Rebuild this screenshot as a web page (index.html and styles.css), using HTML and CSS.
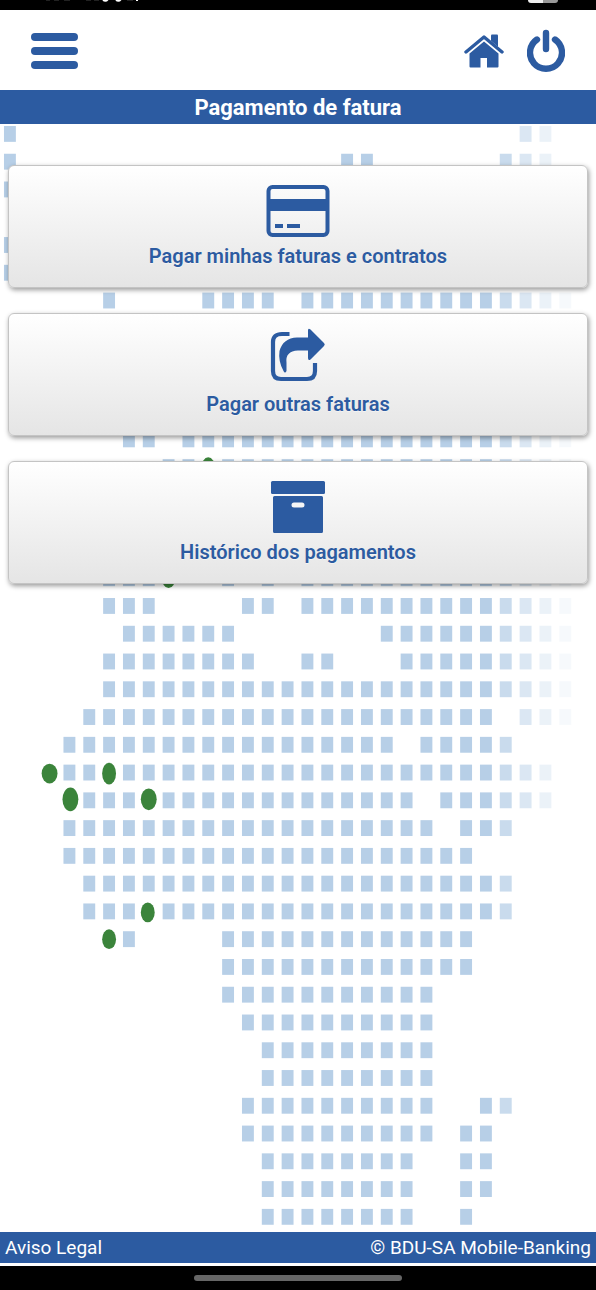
FILE: index.html
```
<!DOCTYPE html>
<html lang="pt">
<head>
  <meta charset="UTF-8" />
  <meta name="viewport" content="width=device-width, initial-scale=1.0"/>
  <title>Pagamento de fatura</title>
  <link rel="stylesheet" href="styles.css">
</head>
<body>
  <div class="status-bar">
    <svg class="status-left" viewBox="0 0 100 10" aria-hidden="true">
      <path d="M4 0h4M12 0h5M22 0h6M44 0h5M52 0h5M74 0h3M85 0h6" stroke="#444" stroke-width="1"/>
      <path d="M61 0q3 2 5-1M74 0q3 2 5-1" fill="none" stroke="#fff" stroke-width="2"/>
      <path d="M95 0v1" stroke="#fff" stroke-width="2"/>
    </svg>
    <span class="status-pill"></span>
  </div>

  <header class="top-bar">
    <button class="icon-btn" aria-label="Menu">
      <svg width="48" height="38" viewBox="0 0 48 38">
        <rect x="1" y="1" width="47" height="8" rx="4"/>
        <rect x="1" y="15" width="47" height="8" rx="4"/>
        <rect x="1" y="29" width="47" height="8" rx="4"/>
      </svg>
    </button>
    <nav class="top-actions">
      <a class="icon-btn" href="#" aria-label="Início">
        <svg width="40" height="34" viewBox="0 0 40 34">
          <path d="M27 1.5q0-1 1-1h5q1 0 1 1v11.2l-7-6z"/>
          <path d="M2 18 20 3l18 15" fill="none" stroke="#2c5ba1" stroke-width="3.4" stroke-linecap="round" stroke-linejoin="round"/>
          <path d="M20 7.5 34.5 19.5V32.5q0 1-1 1H23V24h-6.500v9.500H6.500q-1 0-1-1V19.500z"/>
        </svg>
      </a>
      <a class="icon-btn" href="#" aria-label="Sair">
        <svg width="38" height="44" viewBox="0 0 38 44">
          <path d="M10 10.5A16 16 0 1 0 28 10.5M19 4v16" fill="none" stroke="#2c5ba1" stroke-width="6.4" stroke-linecap="round"/>
        </svg>
      </a>
    </nav>
  </header>

  <h1 class="page-title">Pagamento de fatura</h1>

  <main class="content">
    <svg class="map" id="map" viewBox="0 -1 601 1117" aria-hidden="true"></svg>

    <div class="menu">
      <button class="card">
        <svg width="64" height="54" viewBox="0 0 64 54">
          <rect x="2.500" y="3" width="59" height="48" rx="4" fill="none" stroke="#2c5ba1" stroke-width="4"/>
          <path d="M1 15h62v12H1zM9 40h8v4H9zM21 40h13v4H21z"/>
        </svg>
        <span>Pagar minhas faturas e contratos</span>
      </button>
      <button class="card">
        <svg width="56" height="54" viewBox="0 5 56 54">
          <path d="M19.500 7H12Q3 7 3 15v29q0 8 8 8h26q8 0 8-8v-8" fill="none" stroke="#2c5ba1" stroke-width="4.2"/>
          <path d="M38 3.500q0-3 2.500-1L54 16q1.500 1.500 0 3L40.500 32.500Q38 34 38 31v-7.500H28Q15 24 16.500 36v8q-1.500 3-3 0Q8 34 9.500 24 13 11 27 10.500h11z"/>
        </svg>
        <span>Pagar outras faturas</span>
      </button>
      <button class="card">
        <svg width="56" height="54" viewBox="0 0 56 54">
          <rect x="1" y="1" width="54" height="13" rx="1.5"/>
          <path fill-rule="evenodd" d="M4.500 16h47q1.500 0 1.500 1.500v34q0 1.500-1.500 1.500h-47Q3 53 3 51.500v-34Q3 16 4.500 16zM24 22.500a2.500 2.500 0 0 0 0 5h8a2.500 2.500 0 0 0 0-5z"/>
        </svg>
        <span>Histórico dos pagamentos</span>
      </button>
    </div>
  </main>

  <footer class="footer">
    <a href="#">Aviso Legal</a>
    <span>© BDU-SA Mobile-Banking</span>
  </footer>

  <div class="gesture-bar"><span></span></div>

  <script src="map.js"></script>
</body>
</html>
```
FILE: styles.css
```
* {
  box-sizing: border-box;
}

body {
  margin: 0;
  min-height: 100vh;
  display: flex;
  flex-direction: column;
  font-family: Roboto, "Liberation Sans", sans-serif;
  font-size: 19px;
  background: #fff;
}

svg {
  display: block;
  fill: #2c5ba1;
}

a {
  color: inherit;
  text-decoration: none;
}

.status-bar {
  display: flex;
  justify-content: space-between;
  height: 10px;
  padding: 0 38px 0 42px;
  background: #000;
  overflow: hidden;
}

.status-left {
  width: 100px;
  height: 10px;
}

.status-pill {
  width: 30px;
  height: 3px;
  border-radius: 0 0 12px 12px;
  background: linear-gradient(to right, #eee 50%, #999 50%);
}

.top-bar {
  display: flex;
  justify-content: space-between;
  align-items: center;
  height: 80px;
  padding: 2px 31px 0 30px;
}

.top-actions {
  display: flex;
  align-items: center;
  gap: 23px;
}

.icon-btn {
  padding: 0;
  border: none;
  background: none;
  cursor: pointer;
}

.page-title {
  margin: 0;
  padding-top: 1px;
  font-size: 22px;
  line-height: 33px;
  font-weight: 700;
  text-align: center;
  color: #fff;
  background: #2c5ba1;
}

.content {
  position: relative;
  flex: 1;
  overflow: hidden;
}

/* dotted map behind the menu */
.map {
  position: absolute;
  top: 0;
  left: 0;
  width: 100%;
}

.map rect {
  fill: #b7cfe7;
}

.map ellipse {
  fill: #3b843b;
}

.menu {
  position: relative;
  display: flex;
  flex-direction: column;
  gap: 25px;
  padding: 41px 8px;
}

.card {
  display: flex;
  flex-direction: column;
  align-items: center;
  justify-content: center;
  gap: 5px;
  height: 123px;
  padding: 0;
  border: 1px solid #c4c4c4;
  border-radius: 6px;
  background: linear-gradient(#fff, #e5e5e5);
  box-shadow: 1px 2px 5px rgba(0, 0, 0, 0.4);
  font-family: inherit;
  font-size: 20px;
  line-height: 26px;
  font-weight: 600;
  color: #2c5ba1;
  text-shadow: 0 1px 0 #f3f3f3;
  cursor: pointer;
}

.card svg {
  overflow: visible;
}

.footer {
  display: flex;
  justify-content: space-between;
  padding: 1px 5px 0;
  line-height: 30px;
  color: #fff;
  background: #2c5ba1;
}

.gesture-bar {
  display: flex;
  justify-content: center;
  align-items: center;
  height: 24px;
  margin-top: 3px;
  background: #000;
}

.gesture-bar span {
  width: 35%;
  height: 6px;
  border-radius: 3px;
  background: #666;
}
```
FILE: map.js
```
const map = document.getElementById('map');
const NS = 'http://www.w3.org/2000/svg';

// filled column ranges for each row of the map
const rows = [
  [[0, 0], [26, 27]],
  [[0, 0], [17, 18], [25, 27]],
  [[0, 0]],
  [],
  [[0, 0]],
  [[0, 0]],
  [[5, 5], [10, 13], [15, 28]],
  [[5, 7], [10, 28]],
  [[5, 7], [10, 28]],
  [[6, 7], [9, 28]],
  [[6, 7], [9, 28]],
  [[6, 7], [9, 28]],
  [[8, 9], [11, 28]],
  [[8, 28]],
  [[7, 28]],
  [[6, 28]],
  [[5, 7], [11, 11], [13, 13], [15, 28]],
  [[5, 7], [12, 13], [15, 28]],
  [[6, 11], [19, 28]],
  [[5, 12], [15, 16], [20, 28]],
  [[5, 28]],
  [[4, 24], [26, 28]],
  [[3, 19], [21, 25]],
  [[3, 4], [6, 27]],
  [[4, 6], [8, 20], [22, 27]],
  [[3, 21], [23, 25]],
  [[3, 23]],
  [[4, 25]],
  [[4, 6], [8, 25]],
  [[6, 6], [11, 23]],
  [[11, 23]],
  [[11, 21]],
  [[12, 21]],
  [[13, 21]],
  [[13, 21]],
  [[12, 21], [24, 25]],
  [[12, 21], [23, 24]],
  [[13, 20], [23, 24]],
  [[13, 20], [23, 24]],
  [[13, 20], [23, 23]]
];

// the map fades out on its right side
const fade = { 25: 0.75, 26: 0.5, 27: 0.28, 28: 0.12 };

// x, y, rx, ry
const pins = [
  [210, 346, 7, 11],
  [170, 456, 7, 11],
  [50, 654, 8, 10],
  [110, 654, 7, 11],
  [71, 680, 8, 12],
  [150, 680, 8, 11],
  [149, 794, 7, 10],
  [110, 821, 7, 10]
];

function add(tag, attrs) {
  const el = document.createElementNS(NS, tag);
  for (const key in attrs) el.setAttribute(key, attrs[key]);
  map.appendChild(el);
}

rows.forEach((ranges, row) => {
  ranges.forEach(([from, to]) => {
    for (let col = from; col <= to; col++) {
      add('rect', { x: col * 20 + 4, y: row * 28 + 1, width: 12, height: 16, opacity: fade[col] || 1 });
    }
  });
});

pins.forEach(([cx, cy, rx, ry]) => add('ellipse', { cx, cy, rx, ry }));
```
